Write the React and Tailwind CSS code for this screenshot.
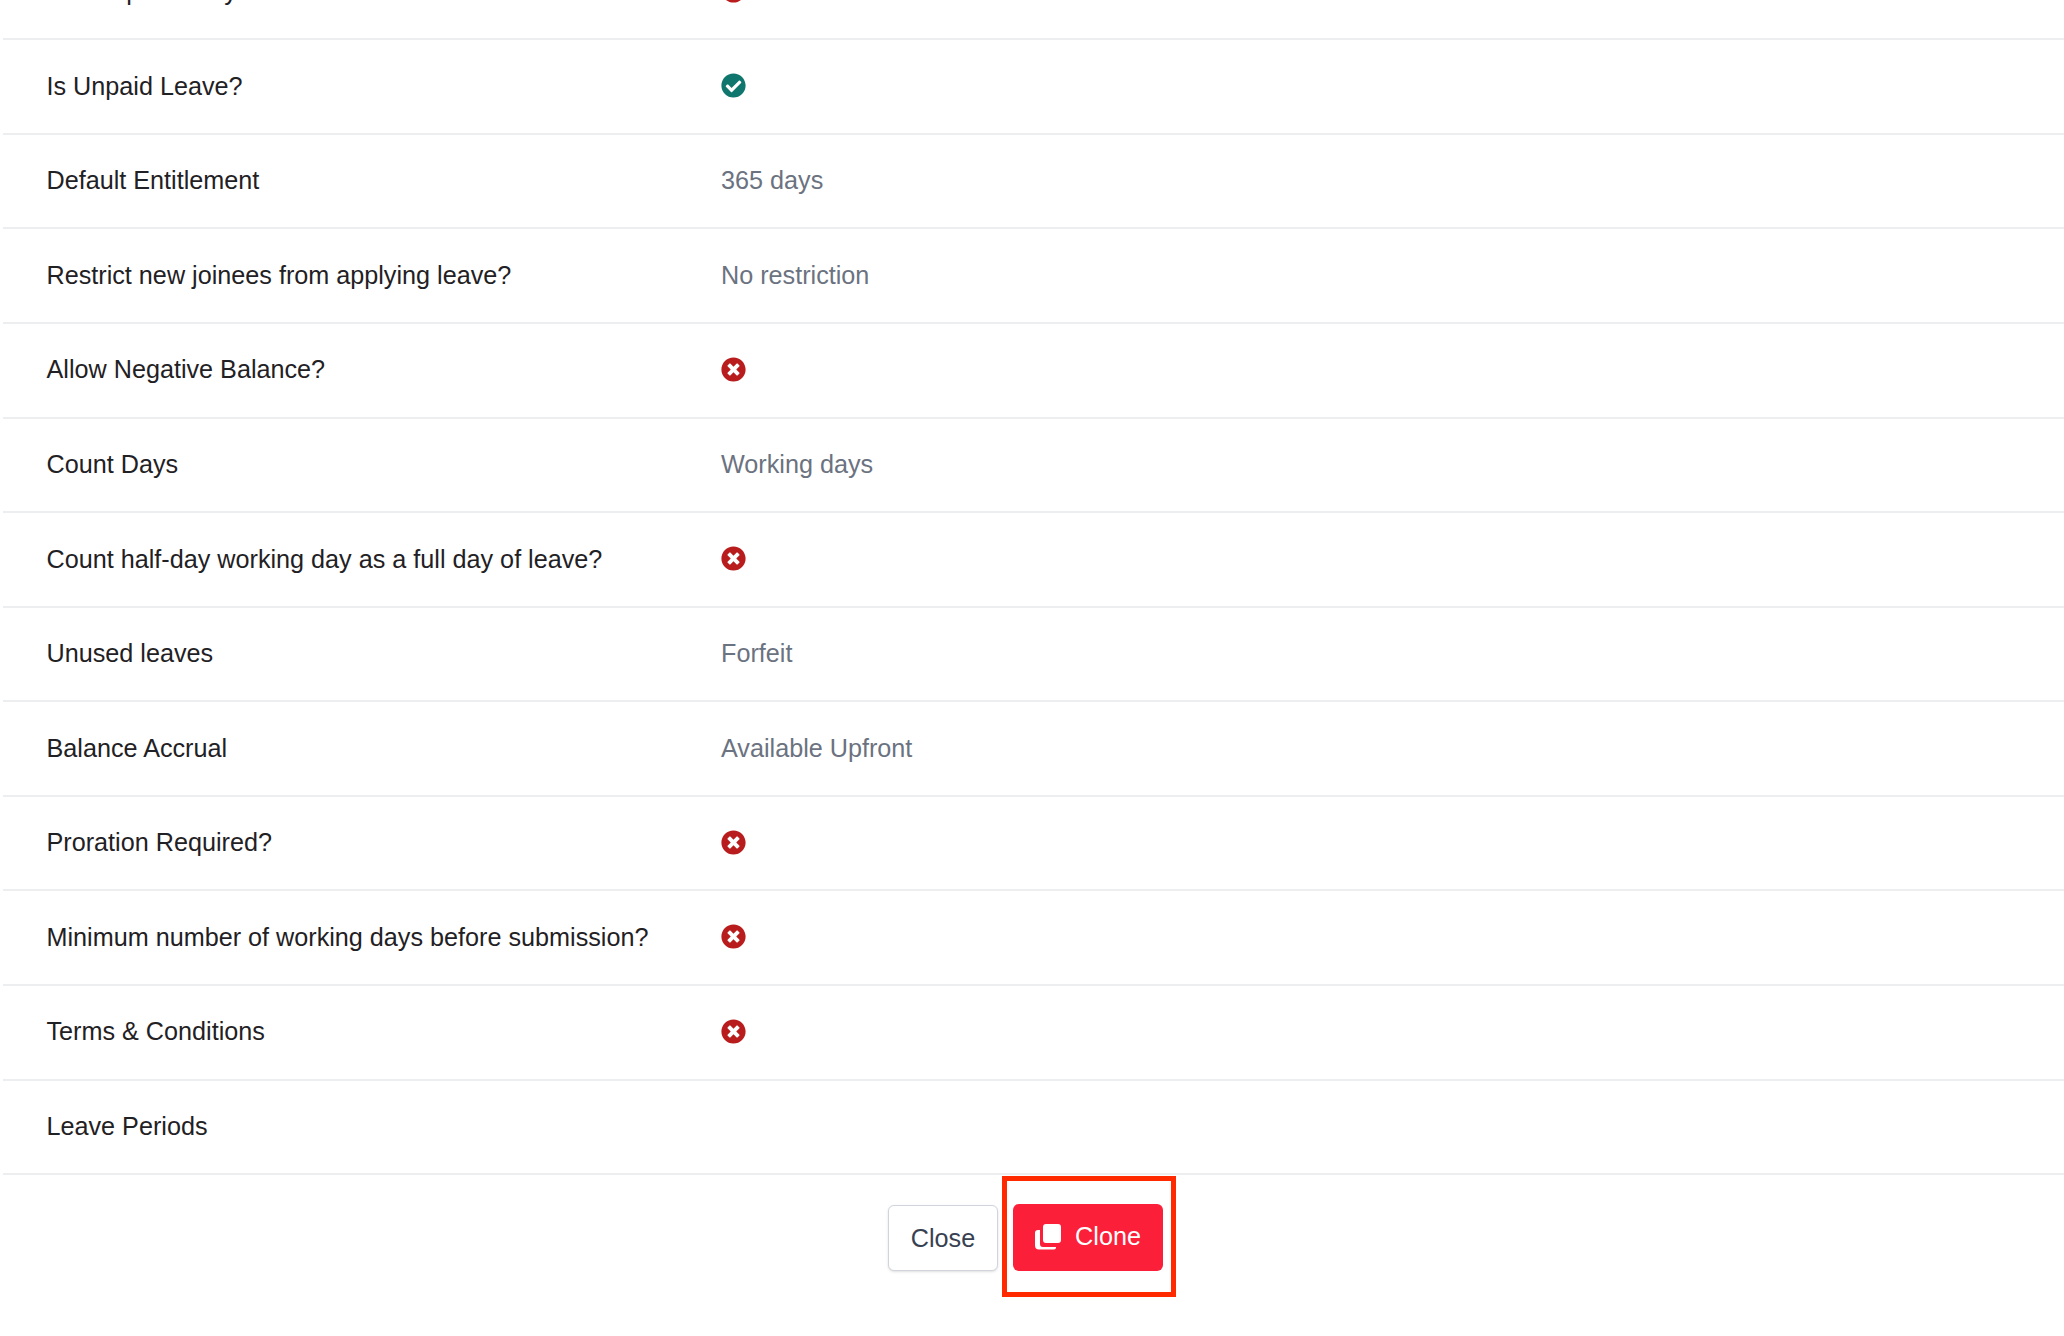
import { FaCheckCircle, FaTimesCircle } from "react-icons/fa";

const rows = [
  { label: "Is Compensatory Leave?", no: true },
  { label: "Is Unpaid Leave?", yes: true },
  { label: "Default Entitlement", text: "365 days" },
  { label: "Restrict new joinees from applying leave?", text: "No restriction" },
  { label: "Allow Negative Balance?", no: true },
  { label: "Count Days", text: "Working days" },
  { label: "Count half-day working day as a full day of leave?", no: true },
  { label: "Unused leaves", text: "Forfeit" },
  { label: "Balance Accrual", text: "Available Upfront" },
  { label: "Proration Required?", no: true },
  { label: "Minimum number of working days before submission?", no: true },
  { label: "Terms & Conditions", no: true },
  { label: "Leave Periods" },
];

function CloneIcon() {
  return (
    <svg width="26" height="26" viewBox="0 0 26 26" fill="white">
      <rect x="8" y="0" width="18" height="19" rx="3" />
      <path d="M5 6v14a3 3 0 0 0 3 3h13v0.5a2 2 0 0 1-2 2H4a4 4 0 0 1-4-4V9a3 3 0 0 1 3-3z" />
    </svg>
  );
}

function DetailRow({ label, text, yes, no }) {
  return (
    <div className="flex items-center h-[94.58px] pl-[43.5px] border-b-2 border-[#eceef0]">
      <div className="w-[674.5px] text-[25.2px] text-[#1f2124]">{label}</div>
      <div className="flex items-center text-[25.2px] text-[#6b7280]">
        {text}
        {yes && <FaCheckCircle size={25} className="text-[#0f766e] -mt-[2px]" />}
        {no && <FaTimesCircle size={25} className="text-[#b91c1c] -mt-[2px]" />}
      </div>
    </div>
  );
}

export default function App() {
  return (
    <div className="h-[1336px] overflow-hidden bg-white font-['Liberation_Sans',Arial,sans-serif]">
      <div className="-mt-[54.3px] ml-[3px]">
        {rows.map((row) => (
          <DetailRow key={row.label} {...row} />
        ))}
      </div>
      <div className="flex justify-center items-start pt-[1px] gap-[4px]">
        <button
          type="button"
          className="mt-[29px] w-[110px] h-[66px] pt-[2px] rounded-[6px] border border-[#d1d5db] bg-white text-[25.2px] text-[#374151] shadow-sm"
        >
          Close
        </button>
        <div className="border-[5px] border-[#ff2a00] w-[174px] h-[121px] pl-[6px] pt-[23px]">
          <button
            type="button"
            className="flex items-center justify-center gap-[14px] w-[150px] h-[67px] rounded-[6px] bg-[#fb1f3a] text-[25.2px] text-white pb-[2px]"
          >
            <CloneIcon />
            Clone
          </button>
        </div>
      </div>
    </div>
  );
}
